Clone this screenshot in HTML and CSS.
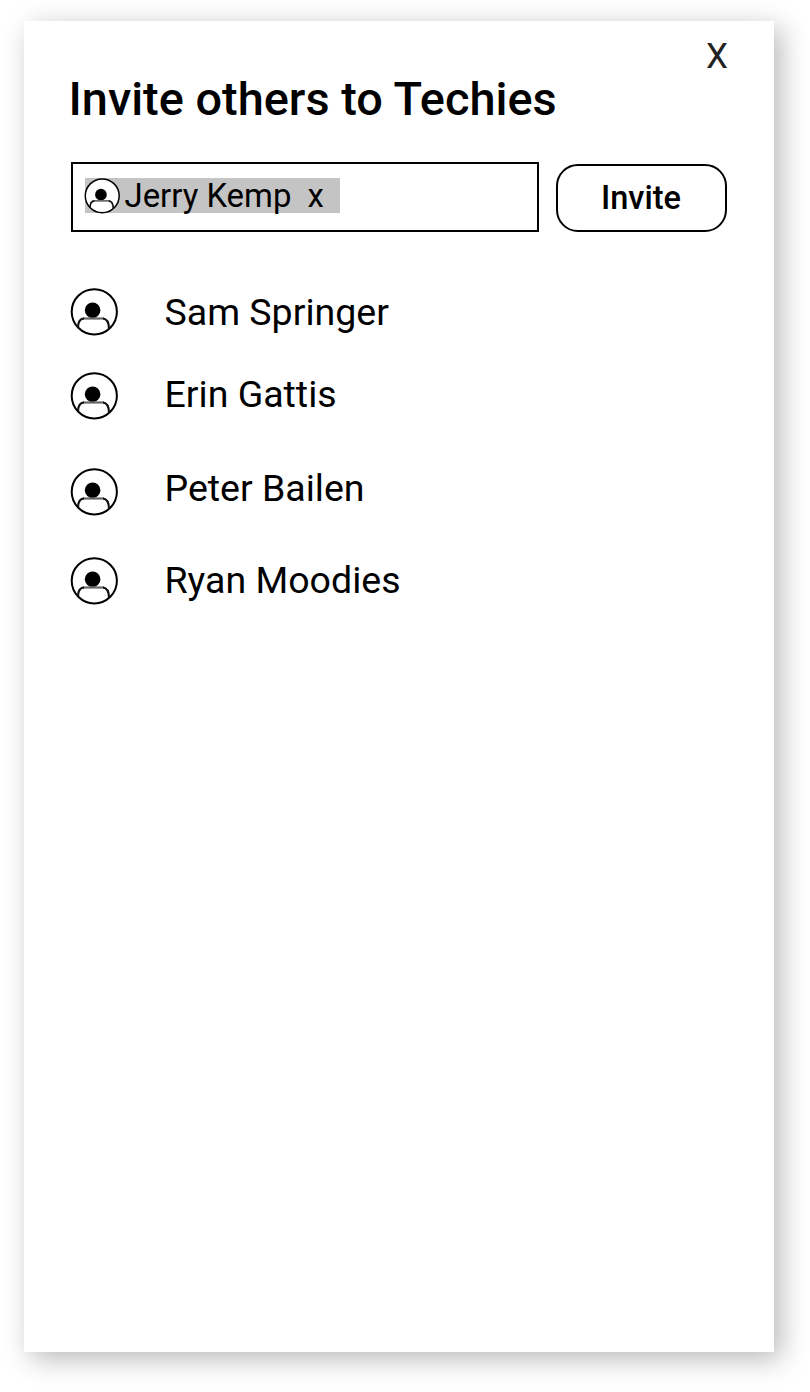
FILE: index.html
```
<!DOCTYPE html>
<html lang="en">
<head>
<meta charset="utf-8">
<title>Invite others to Techies</title>
<link rel="stylesheet" href="styles.css">
</head>
<body>
<svg class="defs" aria-hidden="true">
  <symbol id="avatar" viewBox="0 0 48 48">
    <circle cx="24.3" cy="23.8" r="22.6" fill="#fff" stroke="#000" stroke-width="2"/>
    <circle cx="22.6" cy="22.2" r="7.8"/>
    <path d="M12.5 30.5H34" fill="none" stroke="#666" stroke-width="2.2"/>
    <path d="M8 39.5C8 34.5 9.7 30.8 14 30.5M33 30.5C37 30.8 38.8 34.5 39 40.5" fill="none" stroke="#111" stroke-width="2.2"/>
  </symbol>
</svg>
<main class="dialog">
  <button class="close" aria-label="Close">X</button>
  <h1 class="title">Invite others to Techies</h1>
  <div class="form">
    <div class="field">
      <span class="chip">
        <svg class="chip-avatar"><use href="#avatar"/></svg>
        <span class="chip-name">Jerry Kemp</span>
        <span class="chip-remove">x</span>
      </span>
    </div>
    <button class="invite">Invite</button>
  </div>
  <ul class="people">
    <li class="person"><svg class="avatar"><use href="#avatar"/></svg><span class="name sam">Sam Springer</span></li>
    <li class="person"><svg class="avatar"><use href="#avatar"/></svg><span class="name erin">Erin Gattis</span></li>
    <li class="person"><svg class="avatar"><use href="#avatar"/></svg><span class="name peter">Peter Bailen</span></li>
    <li class="person"><svg class="avatar"><use href="#avatar"/></svg><span class="name ryan">Ryan Moodies</span></li>
  </ul>
</main>
</body>
</html>
```
FILE: styles.css
```
* { box-sizing: border-box; }
body {
  margin: 0;
  height: 1392px;
  padding: 21px 36px 40px 24px;
  overflow: hidden;
  background: #fff;
  color: #000;
  font-family: Roboto, sans-serif;
}
button {
  padding: 0;
  border: 0;
  background: none;
  color: #000;
  font-family: inherit;
}
.defs { display: none; }
.dialog {
  display: flex;
  flex-direction: column;
  height: 1331px;
  padding: 15px 47px 0 46px;
  background: #fff;
  box-shadow: 7px 7px 26px rgba(0, 0, 0, 0.28);
}
.close {
  align-self: flex-end;
  height: 40px;
  margin-right: -1px;
  color: #222;
  font-size: 35px;
  font-weight: 400;
  line-height: 41px;
}
.title {
  margin: -5px 0 0 -1.5px;
  font-size: 46.9px;
  font-weight: 500;
  line-height: 56px;
  white-space: nowrap;
}
.form {
  display: flex;
  gap: 17px;
  margin: 35px 0 0 1px;
}
.field {
  width: 468px;
  height: 70px;
  padding: 14px 12px;
  border: 2px solid #000;
}
.chip {
  display: flex;
  width: 255px;
  height: 35px;
  background: #c4c4c4;
  font-size: 32.9px;
  line-height: 35px;
  white-space: pre;
}
.chip-avatar { width: 36px; height: 36px; margin-left: -1px; }
.chip-name { margin-left: 4.5px; }
.chip-remove { margin-left: 16px; }
.invite {
  width: 171px;
  height: 68px;
  margin-top: 2px;
  padding-right: 1px;
  border: 2px solid #000;
  border-radius: 22px;
  font-size: 32.6px;
  font-weight: 500;
  line-height: 62px;
}
.people {
  display: grid;
  grid-template-rows: 84px 96px 89px 48px;
  margin: 55.5px 0 0;
  padding: 0;
  list-style: none;
}
.person {
  display: flex;
  gap: 46.5px;
}
.avatar { width: 48px; height: 48px; }
.name {
  font-size: 37.5px;
  line-height: 48px;
}
.sam { margin-top: 0.5px; }
.erin { margin-top: -1.5px; }
.peter { margin-top: -3.5px; }
.ryan { margin-top: -1px; }
```
